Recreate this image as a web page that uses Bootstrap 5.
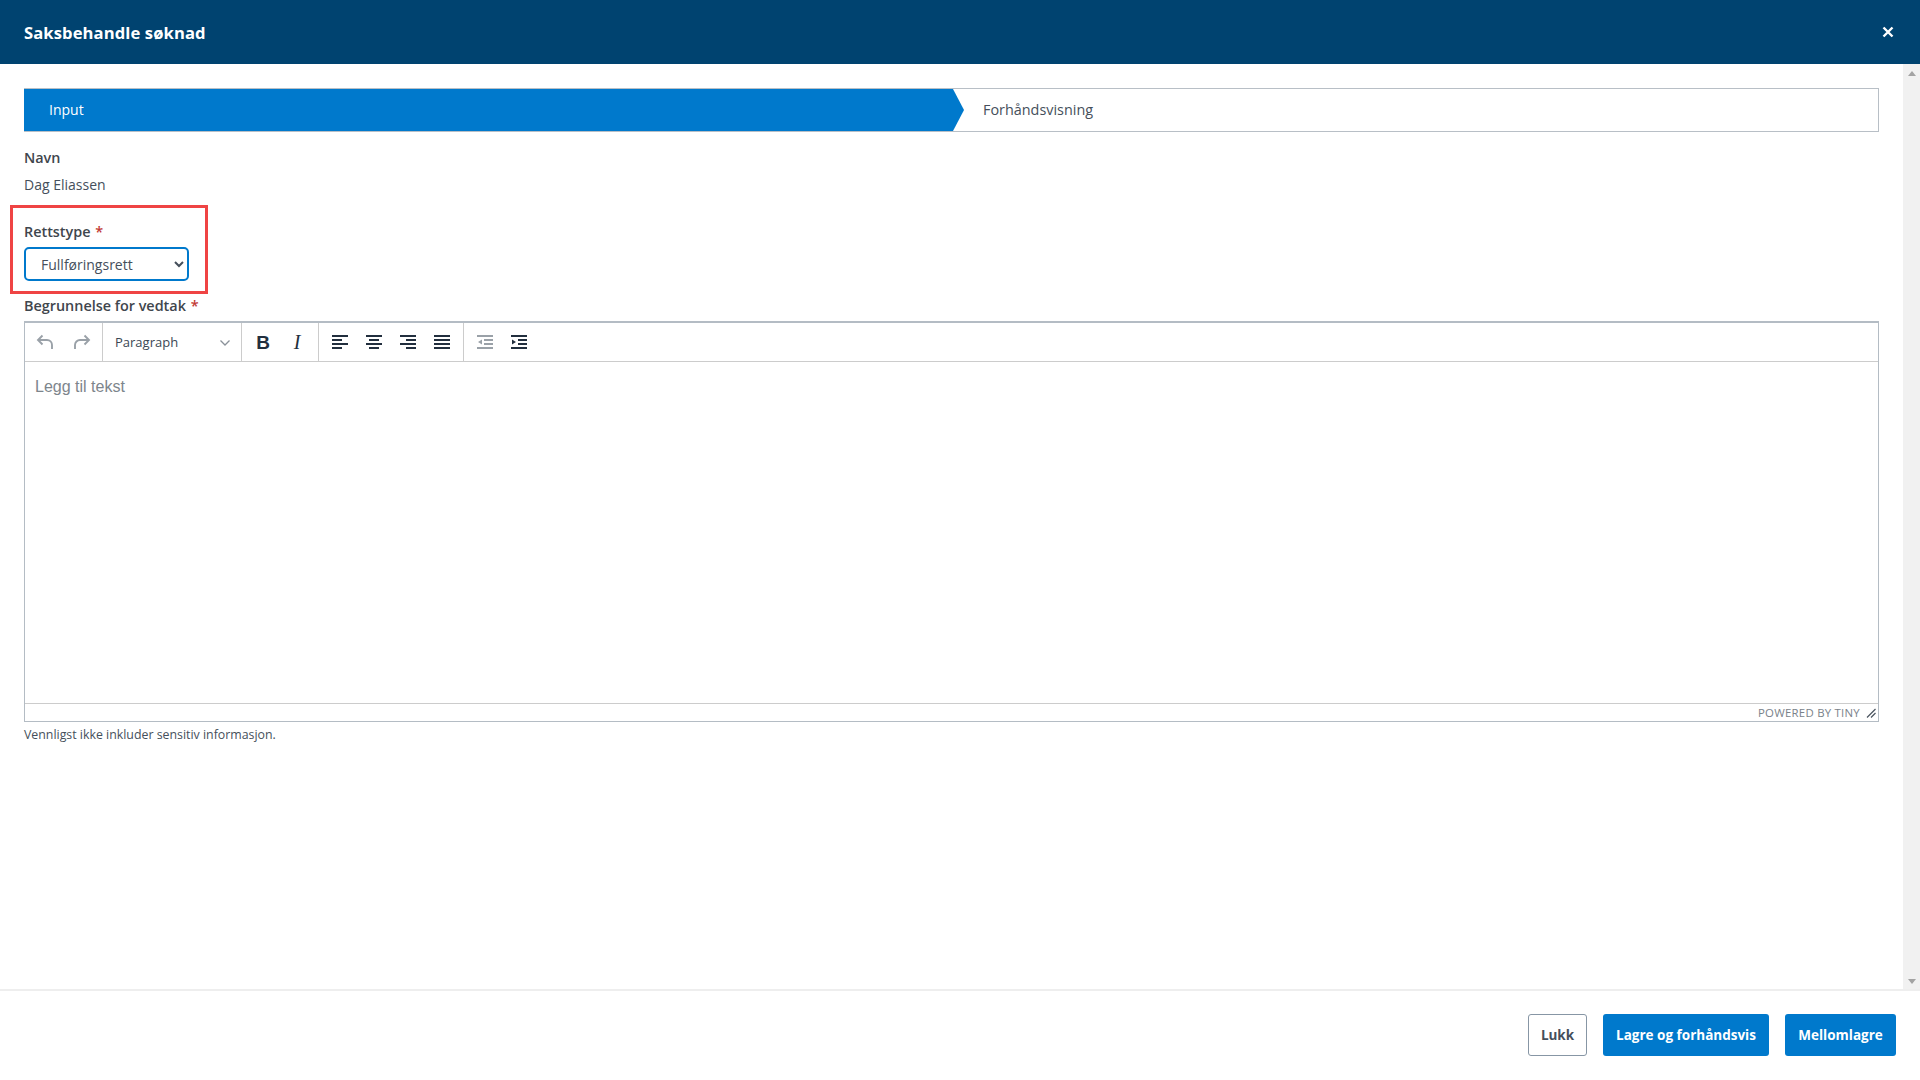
<!DOCTYPE html>
<html lang="no">
<head>
<meta charset="utf-8">
<title>Saksbehandle søknad</title>
<link href="https://cdn.jsdelivr.net/npm/bootstrap@5.3.0/dist/css/bootstrap.min.css" rel="stylesheet">
<style>
html,body{height:100%;overflow:hidden}
body{font-family:"Open Sans","Liberation Sans",sans-serif;font-size:14px;color:#454f5b;background:#fff}
.shell{height:1080px}
.top-bar{height:64px;background:#004370;padding:0 24px}
.top-title{font-size:16.6px;font-weight:700;color:#fff;letter-spacing:.1px;padding-top:2px}
.close-x{width:14px;height:14px;margin-right:1px}
.work-area{height:925px;min-height:0}
.scroll-body{padding:24px 24px 0}
.fake-bar{width:17px;background:#f1f1f1;padding:7px 0 5px}
.arrow-up{width:0;height:0;border:4px solid transparent;border-top:0;border-bottom:5px solid #a3a3a3}
.arrow-down{width:0;height:0;border:4px solid transparent;border-bottom:0;border-top:5px solid #a3a3a3}
.stepper{height:44px;border:1px solid #b8bfc6;border-left:0}
.step-on{width:940px;background:#0079cc;color:#fff;padding:0 0 2px 25px;clip-path:polygon(0 0,929px 0,940px 50%,929px 100%,0 100%);margin-top:-1px;margin-bottom:-1px}
.step-off{padding:0 0 1px 19px;font-size:14.4px}
.field-name{font-weight:600;color:#3f464d;font-size:14.4px;line-height:20px}
.name-block{margin-top:16px}
.name-value{margin-top:7px;line-height:20px}
.rett-block{margin-top:27px;width:165px}
.red-mark{position:absolute;left:-14px;right:-19px;top:-17px;bottom:-13px;border:3px solid #ef4444;pointer-events:none}
.req{color:#c23934;margin-left:1px}
.rett-select{display:block;height:34px;margin-top:5px;width:165px;font-size:14px;color:#454f5b;border:2px solid #0079cc;border-radius:5px;padding:0 0 0 11px;background:#fff;font-family:inherit}
.begr{margin-top:15px}
.tiny-box{height:401px;margin-top:5px;border:2px solid #b4bcc4;border-right-width:1px;border-bottom-width:1px;border-left-width:1px}
.tiny-tools{height:39px;border-bottom:1px solid #ccc}
.tool-group{border-right:1px solid #ccc;height:100%}
.undo-group{padding-right:3px}
.mark-group{padding-left:4px;width:77px}
.align-group{padding-left:4px;width:145px}
.indent-group{padding-left:4px}
.tool-btn{width:34px;height:100%}
.tool-btn svg{width:20px;height:20px}
.tool-first{width:40px}
.format-pick{width:139px;height:100%;padding:2px 10px 0 12px;font-size:13px;color:#3b4754;border-right:1px solid #ccc}
.glyph-b{font:700 19px "Liberation Sans",sans-serif;color:#222f3e;line-height:1}
.glyph-i{font:italic 400 20px "Liberation Serif",serif;color:#222f3e;line-height:1}
.tiny-edit{padding:15px 10px;font-family:"Liberation Sans",sans-serif;font-size:16px;color:#7d858c;line-height:20px}
.tiny-status{height:18px;border-top:1px solid #ccc;font-size:11.4px;color:#7a828a;letter-spacing:.25px;padding:1px 2px 0 0;gap:6px}
.hint{font-size:12.35px;margin-top:4px;line-height:18px}
.bottom-bar{height:91px;border-top:2px solid #eee;padding:0 24px 2px 0;gap:16px}
.act{height:42px;font-weight:700;font-size:13.5px;border-radius:3px;padding:1px 0 0;display:flex;align-items:center;justify-content:center}
.act-line{width:59px;background:#fff;border:1px solid #8796a5;color:#454f5b}
.act-save{width:166px;background:#0079cc;border:0;color:#fff}
.act-mid{width:111px;background:#0079cc;border:0;color:#fff}
</style>
</head>
<body>
<div class="shell d-flex flex-column">
  <header class="top-bar d-flex align-items-center justify-content-between">
    <div class="top-title">Saksbehandle søknad</div>
    <svg class="close-x" viewBox="0 0 14 14" aria-label="Lukk"><path d="M2.5 2.5l9 9M11.5 2.5l-9 9" stroke="#fff" stroke-width="2.4"/></svg>
  </header>
  <div class="work-area d-flex">
    <main class="scroll-body flex-grow-1">
      <div class="stepper d-flex align-items-center">
        <div class="step-on h-100 d-flex align-items-center box-content">Input</div>
        <div class="step-off">Forhåndsvisning</div>
      </div>
      <div class="name-block field-name">Navn</div>
      <div class="name-value">Dag Eliassen</div>
      <div class="rett-block position-relative">
        <div class="red-mark"></div>
        <div class="field-name">Rettstype <span class="req">*</span></div>
        <select class="rett-select"><option>Fullføringsrett</option></select>
      </div>
      <div class="begr field-name">Begrunnelse for vedtak <span class="req">*</span></div>
      <div class="tiny-box d-flex flex-column">
        <div class="tiny-tools d-flex align-items-center">
          <div class="tool-group undo-group d-flex align-items-center">
            <div class="tool-btn tool-first d-flex align-items-center justify-content-center"><svg viewBox="0 0 20 20" fill="none" stroke="#9aa1a8" stroke-width="1.9"><path d="M7.5 3.5L3 8l4.5 4.5M3 8h9a5 5 0 0 1 5 5v4"/></svg></div>
            <div class="tool-btn d-flex align-items-center justify-content-center"><svg viewBox="0 0 20 20" fill="none" stroke="#9aa1a8" stroke-width="1.9"><path d="M12.5 3.5L17 8l-4.5 4.5M17 8H8a5 5 0 0 0-5 5v4"/></svg></div>
          </div>
          <div class="format-pick d-flex align-items-center justify-content-between">
            <span>Paragraph</span>
            <svg width="12" height="8" viewBox="0 0 12 8" fill="none" stroke="#8a9199" stroke-width="1.3"><path d="M1.5 1.5L6 6l4.5-4.5"/></svg>
          </div>
          <div class="tool-group mark-group d-flex align-items-center">
            <div class="tool-btn d-flex align-items-center justify-content-center"><span class="glyph-b">B</span></div>
            <div class="tool-btn d-flex align-items-center justify-content-center"><span class="glyph-i">I</span></div>
          </div>
          <div class="tool-group align-group d-flex align-items-center">
            <div class="tool-btn d-flex align-items-center justify-content-center"><svg viewBox="0 0 20 20" fill="#222f3e"><path d="M2 3h16v2H2zM2 7h10v2H2zM2 11h16v2H2zM2 15h10v2H2z"/></svg></div>
            <div class="tool-btn d-flex align-items-center justify-content-center"><svg viewBox="0 0 20 20" fill="#222f3e"><path d="M2 3h16v2H2zM5 7h10v2H5zM2 11h16v2H2zM5 15h10v2H5z"/></svg></div>
            <div class="tool-btn d-flex align-items-center justify-content-center"><svg viewBox="0 0 20 20" fill="#222f3e"><path d="M2 3h16v2H2zM8 7h10v2H8zM2 11h16v2H2zM8 15h10v2H8z"/></svg></div>
            <div class="tool-btn d-flex align-items-center justify-content-center"><svg viewBox="0 0 20 20" fill="#222f3e"><path d="M2 3h16v2H2zM2 7h16v2H2zM2 11h16v2H2zM2 15h16v2H2z"/></svg></div>
          </div>
          <div class="indent-group d-flex align-items-center h-100">
            <div class="tool-btn d-flex align-items-center justify-content-center"><svg viewBox="0 0 20 20" fill="#9aa1a8"><path d="M2 3h16v2H2zM9 7h9v2H9zM9 11h9v2H9zM2 15h16v2H2zM7 7.5v5L3 10z"/></svg></div>
            <div class="tool-btn d-flex align-items-center justify-content-center"><svg viewBox="0 0 20 20" fill="#222f3e"><path d="M2 3h16v2H2zM9 7h9v2H9zM9 11h9v2H9zM2 15h16v2H2zM3 7.5v5L7 10z"/></svg></div>
          </div>
        </div>
        <div class="tiny-edit flex-grow-1">Legg til tekst</div>
        <div class="tiny-status d-flex align-items-center justify-content-end">
          <span>POWERED BY TINY</span>
          <svg width="10" height="10" viewBox="0 0 10 10" fill="none" stroke="#4b5560" stroke-width="1.2"><path d="M1 9.5L9.5 1M5 9.5L9.5 5"/></svg>
        </div>
      </div>
      <div class="hint">Vennligst ikke inkluder sensitiv informasjon.</div>
    </main>
    <div class="fake-bar d-flex flex-column align-items-center justify-content-between">
      <div class="arrow-up"></div>
      <div class="arrow-down"></div>
    </div>
  </div>
  <footer class="bottom-bar d-flex align-items-center justify-content-end">
    <button class="act act-line" type="button">Lukk</button>
    <button class="act act-save" type="button">Lagre og forhåndsvis</button>
    <button class="act act-mid" type="button">Mellomlagre</button>
  </footer>
</div>
<script src="https://cdn.jsdelivr.net/npm/bootstrap@5.3.0/dist/js/bootstrap.bundle.min.js"></script>
</body>
</html>
